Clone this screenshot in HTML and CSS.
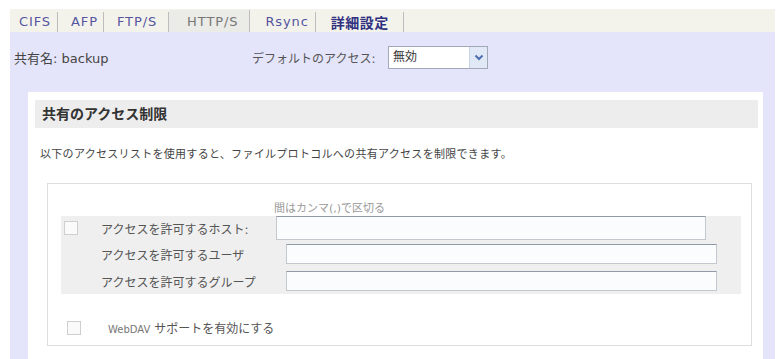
FILE: index.html
```html
<!DOCTYPE html>
<html lang="ja">
<head>
    <meta charset="UTF-8">
    <meta name="viewport" content="width=device-width, initial-scale=1.0">
    <title>共有の設定 - 詳細設定</title>

    <link rel="stylesheet" href="styles.css">
</head>
<body>

    <!-- タブ -->
    <div class="tabs">
        <a href="#" class="tab tab-cifs">CIFS</a>
        <a href="#" class="tab tab-afp">AFP</a>
        <a href="#" class="tab tab-ftp">FTP/S</a>
        <a href="#" class="tab tab-gray">HTTP/S</a>
        <a href="#" class="tab tab-rsync">Rsync</a>
        <a href="#" class="tab tab-current">詳細設定</a>
    </div>

    <div class="panel">
        <div class="share-row">
            <span class="share-name">共有名: backup</span>
            <span class="access-label">デフォルトのアクセス:</span>
            <div class="select">
                <span class="select-value">無効</span>
                <span class="select-arrow">
                    <svg width="10" height="7" viewBox="0 0 10 7"><path d="M1.5 1.5 L5 5 L8.5 1.5" fill="none" stroke="#4d6fb0" stroke-width="2"/></svg>
                </span>
            </div>
        </div>

        <div class="box">
            <div class="box-header">共有のアクセス制限</div>
            <p class="desc">以下のアクセスリストを使用すると、ファイルプロトコルへの共有アクセスを制限できます。</p>

            <div class="inner">
                <div class="hint">間はカンマ(,)で区切る</div>

                <div class="rows">
                    <div class="row row-host">
                        <span class="check"></span>
                        <label class="row-label label-host">アクセスを許可するホスト:</label>
                        <input type="text" class="field field-host">
                    </div>
                    <div class="row row-user">
                        <span class="check check-empty"></span>
                        <label class="row-label">アクセスを許可するユーザ</label>
                        <input type="text" class="field">
                    </div>
                    <div class="row row-group">
                        <span class="check check-empty"></span>
                        <label class="row-label">アクセスを許可するグループ</label>
                        <input type="text" class="field">
                    </div>
                </div>

                <div class="webdav">
                    <span class="check"></span>
                    <label class="webdav-label"><span class="latin">WebDAV</span> サポートを有効にする</label>
                </div>
            </div>
        </div>
    </div>

</body>
</html>
```

FILE: styles.css
```css
body {
    font-family: 'DejaVu Sans', 'Noto Sans CJK JP', sans-serif;
    margin: 0;
    padding-top: 9px;
    background: white;
    color: #444;
}

.tabs {
    display: flex;
    align-items: flex-end;
    margin-left: 10px;
    width: 765px;
    height: 23px;
    background: #f3f3ec;
}

.tab {
    display: block;
    height: 20px;
    line-height: 20px;
    padding: 0 9px 0 10px;
    border-right: 1px solid #bdbdbd;
    font-size: 13px;
    letter-spacing: 0.9px;
    color: #5555a0;
    text-decoration: none;
}

.tab-cifs {
    padding: 0 6px 0 9px;
}

.tab-afp {
    padding: 0 5px 0 13px;
}

.tab-ftp {
    padding: 0 11px 0 13px;
}

.tab-gray {
    color: #777;
    background: #ebebe7;
    padding: 0 11px 0 18px;
    height: 22px;
    line-height: 24px;
}

.tab-rsync {
    padding: 0 6px 0 15px;
}

.tab-current {
    color: #303080;
    font-weight: bold;
    font-family: 'Noto Sans CJK JP', sans-serif;
    font-size: 14px;
    padding: 0 14px 0 15px;
    letter-spacing: 0.5px;
}

.panel {
    margin-left: 10px;
    width: 765px;
    height: 330px;
    background: #e4e4fa;
}

.share-row {
    display: flex;
    align-items: center;
    height: 24px;
    padding: 13px 0 0 4px;
    font-size: 13px;
}

.share-name {
    width: 238px;
    color: #444;
}

.access-label {
    width: 136px;
    font-size: 12px;
    color: #555;
}

.select {
    display: flex;
    width: 98px;
    height: 21px;
    border: 1px solid #a3a8b8;
    background: white;
}

.select-value {
    flex: 1;
    font-size: 12px;
    line-height: 21px;
    padding-left: 4px;
    color: #333;
}

.select-arrow {
    width: 17px;
    display: flex;
    align-items: center;
    justify-content: center;
    background: #e2e9f6;
    border-left: 1px solid #c9d3e6;
}

.box {
    margin: 23px 0 0 18px;
    width: 723px;
    height: 260px;
    padding: 8px 5px 0 7px;
    background: white;
}

.box-header {
    height: 28px;
    line-height: 28px;
    padding-left: 7px;
    background: #ededed;
    font-size: 14px;
    font-weight: bold;
    color: #333;
}

.desc {
    margin: 19px 0 0 5px;
    font-size: 11px;
    letter-spacing: 0.3px;
    line-height: 16px;
    color: #444;
}

.inner {
    margin: 20px 0 0 12px;
    width: 703px;
    height: 161px;
    border: 1px solid #dedede;
}

.hint {
    margin: 17px 0 0 226px;
    height: 15px;
    line-height: 15px;
    font-size: 11px;
    color: #9a9a9a;
}

.rows {
    margin-left: 13px;
    width: 680px;
    padding-bottom: 3px;
    background: #efefef;
}

.row {
    display: flex;
    align-items: center;
}

.row-host {
    height: 24px;
}

.row-user {
    margin-top: 4px;
    height: 20px;
}

.row-group {
    margin-top: 7px;
    height: 20px;
}

.check {
    width: 12px;
    height: 12px;
    margin: 0 23px 0 3px;
    border: 1px solid #cfcfcf;
    background: #fafafa;
}

.check-empty {
    visibility: hidden;
}

.row-label {
    width: 185px;
    font-size: 12px;
    color: #555;
}

.label-host {
    width: 175px;
}

.field {
    box-sizing: border-box;
    width: 431px;
    height: 100%;
    margin: 0;
    border: 1px solid #c3c8cf;
    border-top-color: #8f9aa6;
    background: #fbfcfe;
    font-size: 12px;
}

.field-host {
    width: 430px;
}

.webdav {
    display: flex;
    align-items: center;
    margin: 25px 0 0 16px;
}

.webdav .check {
    margin-right: 27px;
}

.webdav-label {
    font-size: 12px;
    color: #555;
}

.latin {
    font-size: 10px;
    color: #777;
}
```
